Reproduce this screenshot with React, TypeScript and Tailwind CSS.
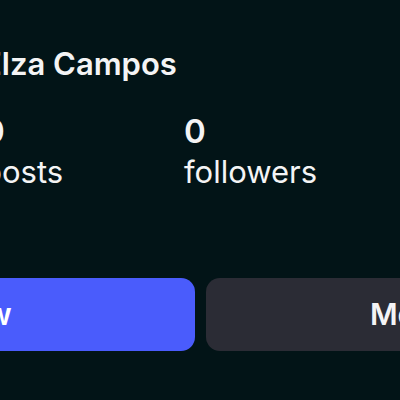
export default function App() {
  return (
    <div className="h-[400px] w-[400px] overflow-hidden bg-[#021417] font-['Inter',sans-serif] text-[#f4f4f5]">
      <div className="ml-[-265px] w-[931px]">
        <div className="flex gap-[28px] pt-[46px]">
          <div className="h-[220px] w-[220px] shrink-0" />
          <div className="flex flex-col">
            <h1 className="text-[31px] leading-[36px] font-semibold">Elza Campos</h1>
            <div className="mt-[29px] flex">
              <div className="w-[201px]">
                <div className="text-[33px] leading-[40px] font-semibold">0</div>
                <div className="mt-[3px] text-[31px] leading-[36px]">posts</div>
              </div>
              <div>
                <div className="text-[33px] leading-[40px] font-semibold">0</div>
                <div className="mt-[3px] text-[31px] leading-[36px]">followers</div>
              </div>
            </div>
          </div>
        </div>
        <div className="mt-[12px] flex gap-[11px]">
          <button className="h-[73px] w-[460px] rounded-[14px] bg-[#4a5cfc] text-[30px] font-semibold text-white">
            Follow
          </button>
          <button className="h-[73px] w-[460px] rounded-[14px] bg-[#2b2c35] text-[30px] font-semibold text-[#f4f4f5]">
            Message
          </button>
        </div>
      </div>
    </div>
  )
}
